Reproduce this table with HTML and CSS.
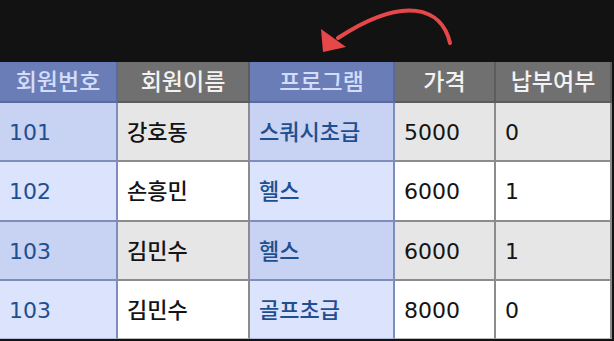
FILE: index.html
```html
<!DOCTYPE html>
<html lang="ko">
<head>
<meta charset="utf-8">
<link rel="stylesheet" href="styles.css">
</head>
<body>
<div class="top">
  <svg class="arrow" width="614" height="62" viewBox="0 0 614 62">
    <path d="M450 43 C 442 8, 405 -6, 338 38" fill="none" stroke="#e8474a" stroke-width="4" stroke-linecap="round"/>
    <polygon points="321,29 346,47 323,52" fill="#e8474a"/>
  </svg>
</div>
<div class="grid">
  <div class="cell head blue">회원번호</div>
  <div class="cell head gray">회원이름</div>
  <div class="cell head blue">프로그램</div>
  <div class="cell head gray">가격</div>
  <div class="cell head gray last">납부여부</div>

  <div class="cell b odd">101</div>
  <div class="cell g odd">강호동</div>
  <div class="cell b odd">스쿼시초급</div>
  <div class="cell g odd">5000</div>
  <div class="cell g odd last">0</div>

  <div class="cell b even">102</div>
  <div class="cell g even">손흥민</div>
  <div class="cell b even">헬스</div>
  <div class="cell g even">6000</div>
  <div class="cell g even last">1</div>

  <div class="cell b odd">103</div>
  <div class="cell g odd">김민수</div>
  <div class="cell b odd">헬스</div>
  <div class="cell g odd">6000</div>
  <div class="cell g odd last">1</div>

  <div class="cell b even end">103</div>
  <div class="cell g even end">김민수</div>
  <div class="cell b even end">골프초급</div>
  <div class="cell g even end">8000</div>
  <div class="cell g even end last">0</div>
</div>
</body>
</html>
```
FILE: styles.css
```css
html, body {
  margin: 0;
  padding: 0;
  background: #121212;
  width: 614px;
  height: 341px;
  overflow: hidden;
}
body {
  font-family: "DejaVu Sans", "Noto Sans CJK KR", sans-serif;
}
.top {
  height: 62px;
}
.arrow {
  display: block;
}
.grid {
  display: grid;
  grid-template-columns: 118px 132px 145px 101px 116px;
  grid-template-rows: 41px 59px 60px 59px 59px;
  width: 612px;
}
.cell {
  box-sizing: border-box;
  display: flex;
  align-items: center;
  border-right: 2px solid #8c8c8c;
  border-bottom: 2px solid #8c8c8c;
  font-size: 22px;
  font-weight: 500;
  line-height: 1;
  padding-left: 9px;
  padding-top: 2px;
  white-space: nowrap;
}
.head {
  justify-content: center;
  padding-left: 0;
  font-size: 23px;
  padding-top: 2px;
}
.head.blue {
  background: #6a7db7;
  color: #d3ddfb;
  border-right-color: #5a6a9e;
  border-bottom-color: #5a6a9e;
}
.head.gray {
  background: #707070;
  color: #f2f2f2;
  border-right-color: #5c5c5c;
  border-bottom-color: #5c5c5c;
}
.b {
  color: #1e4f91;
  border-right-color: #7f8dbd;
  border-bottom-color: #7f8dbd;
}
.b.odd { background: #c8d2f2; }
.b.even { background: #dbe3fd; }
.g { color: #141414; }
.g.odd { background: #e6e6e6; }
.g.even { background: #ffffff; }
.end {
  border-bottom: 1px solid #b8b8b8;
  height: 58px;
}
.b.end { border-bottom-color: #b0bbe0; }
```
